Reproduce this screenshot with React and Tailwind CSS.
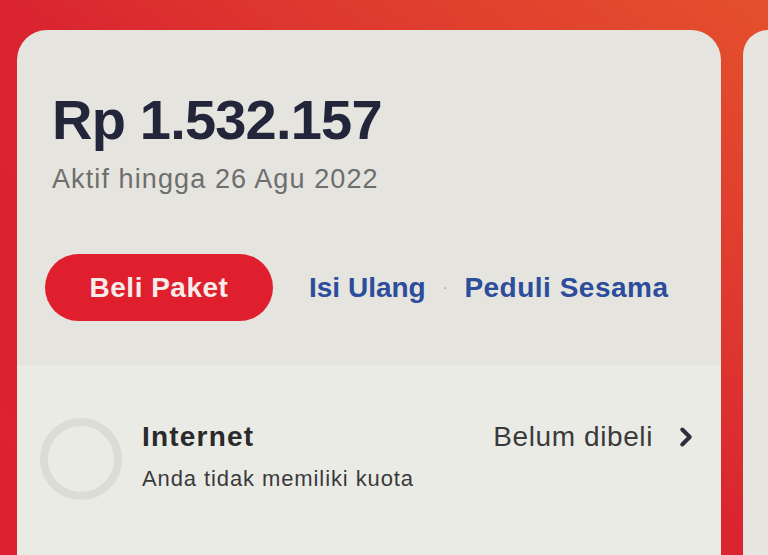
import { ChevronRight } from 'lucide-react';

const font = { fontFamily: '"Liberation Sans", Arial, sans-serif' };

export default function App() {
    return (
        <div
            className="flex h-[555px] w-[768px] gap-[22px] overflow-hidden bg-gradient-to-bl from-[#e4502c] via-[#da2430] to-[#dc222e] pl-[17px] pt-[30px]"
            style={font}
        >
            {/* kartu pulsa */}
            <div className="flex w-[704px] shrink-0 flex-col overflow-hidden rounded-t-[30px] bg-[#e5e4df]">
                <div className="flex h-[335px] flex-col px-[35px] pt-[62px]">
                    <div className="text-[56px] font-bold leading-none tracking-[-0.8px] text-[#23253a]">Rp 1.532.157</div>
                    <div className="mt-[18px] text-[27px] leading-none tracking-[1.1px] text-[#6e6e6c]">Aktif hingga 26 Agu 2022</div>

                    <div className="-ml-[7px] mt-[61px] flex items-center">
                        <button className="flex h-[67px] w-[228px] items-center justify-center rounded-full bg-[#df1f2d] text-[28px] font-bold tracking-[0.5px] text-[#f7ecea]">
                            Beli Paket
                        </button>
                        <span className="ml-[36px] text-[28px] font-bold text-[#2c4c9c]">Isi Ulang</span>
                        <span className="mx-[17px] text-[14px] text-[#9aa0b8]">·</span>
                        <span className="text-[28px] font-bold tracking-[0.5px] text-[#2c4c9c]">Peduli Sesama</span>
                    </div>
                </div>

                <div className="flex flex-1 items-start bg-[#ebebe6] pl-[23px] pr-[20px] pt-[53px]">
                    <div className="h-[82px] w-[82px] shrink-0 rounded-full border-[8px] border-[#dcdcd7]"></div>
                    <div className="ml-[20px] flex flex-1 flex-col pt-[4px]">
                        <div className="flex items-center justify-between">
                            <span className="text-[28px] font-bold leading-none tracking-[1.2px] text-[#2a2a2c]">Internet</span>
                            <span className="flex items-center text-[28px] leading-none tracking-[0.6px] text-[#3a3a3c]">
                                Belum dibeli
                                <ChevronRight className="ml-[18px] h-[30px] w-[30px] text-[#2d2f3a]" strokeWidth={3.2} />
                            </span>
                        </div>
                        <div className="mt-[16px] text-[22px] leading-none tracking-[0.9px] text-[#3a3a3c]">Anda tidak memiliki kuota</div>
                    </div>
                </div>
            </div>

            {/* kartu berikutnya */}
            <div className="flex-1 rounded-tl-[30px] bg-[#e6e5e0]"></div>
        </div>
    );
}
